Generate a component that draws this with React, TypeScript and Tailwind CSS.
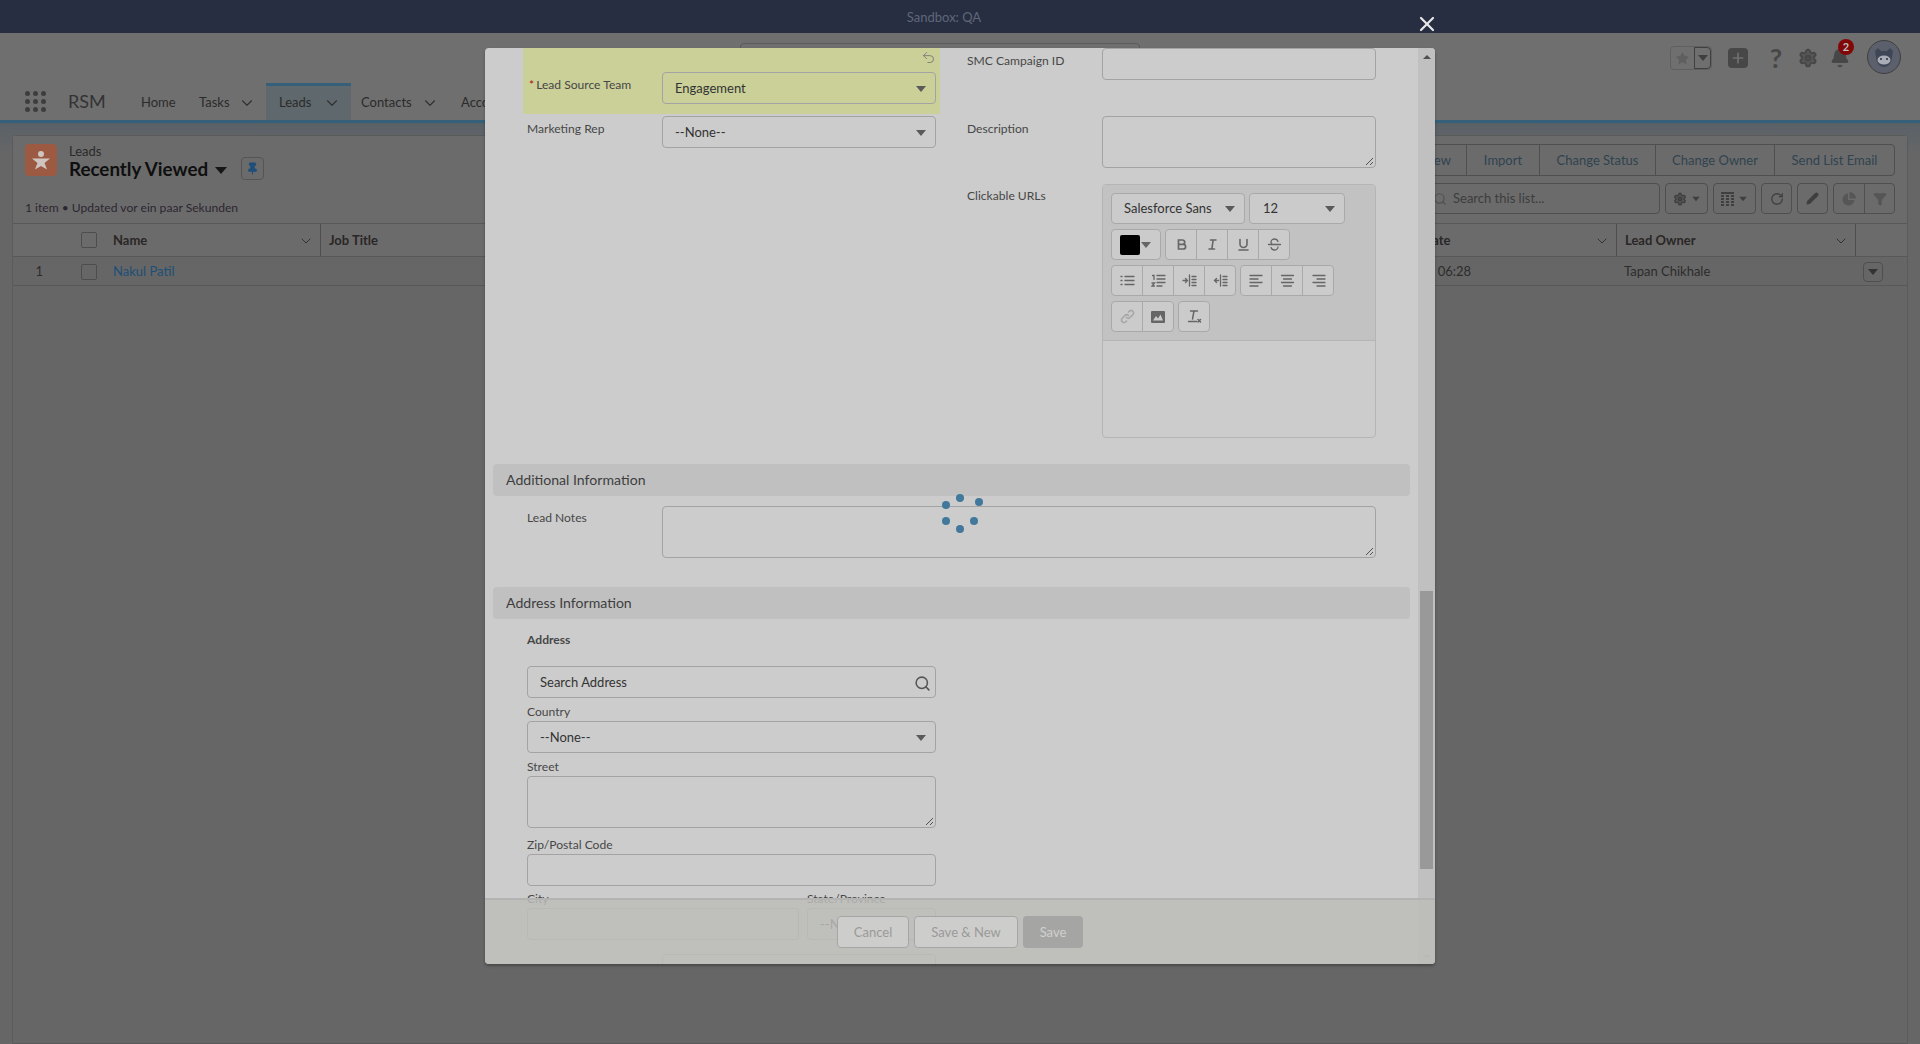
import React from "react";
import { ChevronDown, Search, X, Star, Plus, Pin, RotateCw, Undo2, Filter, Pencil, Settings, Bell } from "lucide-react";

const Caret = ({ c = "border-t-[#5a5a5a]" }: { c?: string }) => (
  <span className={`inline-block h-0 w-0 border-x-[5px] border-t-[6px] border-x-transparent ${c}`} />
);

const Tab = ({ label, w, active, chevron = true }: { label: string; w: string; active?: boolean; chevron?: boolean }) => (
  <div className={`flex h-[37px] items-center ${w} ${active ? "border-t-[3px] border-[#36607a] bg-[#5f686c] pb-[1px]" : "pt-[2px]"}`}>
    <span className="text-[13px] text-[#2b2b2b]">{label}</span>
    {chevron && <ChevronDown className="ml-auto mr-[10px] text-[#303030]" size={18} strokeWidth={1.5} />}
  </div>
);

const HeadCell = ({ label, w, chevron = true, border = true }: { label: string; w: string; chevron?: boolean; border?: boolean }) => (
  <div className={`flex h-full items-center pl-2 pr-[6px] pt-[2px] ${w} ${border ? "border-r border-[#4e4e4e]" : ""}`}>
    <span className="text-[13px] font-bold text-[#2a2626]">{label}</span>
    {chevron && <ChevronDown className="ml-auto text-[#333]" size={16} strokeWidth={1.5} />}
  </div>
);

const Label = ({ children, className = "" }: { children: React.ReactNode; className?: string }) => (
  <div className={`text-[12.1px] leading-[16px] text-[#474747] ${className}`}>{children}</div>
);

const Input = ({ className = "", children }: { className?: string; children?: React.ReactNode }) => (
  <div className={`relative flex h-[32px] items-center rounded-[4px] border border-[#a3a3a3] px-3 pt-[2px] text-[13px] text-[#333] ${className}`}>{children}</div>
);

const SelectBox = ({ value, className = "" }: { value: string; className?: string }) => (
  <Input className={className}>
    <span>{value}</span>
    <span className="ml-auto mr-[-3px] flex"><Caret /></span>
  </Input>
);

const Textarea = ({ className = "" }: { className?: string }) => (
  <div className={`relative h-[52px] rounded-[4px] border border-[#a3a3a3] ${className}`}>
    <svg className="absolute bottom-[1px] right-[1px]" width="9" height="9" viewBox="0 0 9 9">
      <path d="M1 8 8 1M5 8 8 5" stroke="#444" strokeWidth="0.9" />
    </svg>
  </div>
);

const SvgI = ({ children, dim }: { children: React.ReactNode; dim?: boolean }) => (
  <svg width="15" height="15" viewBox="0 0 15 15" fill="none" stroke={dim ? "#a5a5a5" : "#666"} strokeWidth="1.3" strokeLinecap="round">
    {children}
  </svg>
);

const TBtn = ({ children, last }: { children: React.ReactNode; last?: boolean }) => (
  <div className={`flex h-full items-center justify-center ${last ? "w-[30px]" : "w-[31px] border-r border-[#a9a9a9]"}`}>{children}</div>
);

const Group = ({ children }: { children: React.ReactNode }) => (
  <div className="flex h-[31px] rounded-[4px] border border-[#a9a9a9] bg-[#cbcbcb]">{children}</div>
);

const Lines = ({ d }: { d: string }) => <path d={d} />;

const ListBtn = ({ label, w }: { label: string; w: string }) => (
  <div className={`flex h-full items-center justify-center border-r border-[#4f4f4f] pt-[1px] text-[13px] text-[#2f4350] last:border-r-0 ${w}`}>{label}</div>
);

const ToolBtn = ({ children, w = "w-[31px]" }: { children: React.ReactNode; w?: string }) => (
  <div className={`flex h-[31px] items-center justify-center gap-1 rounded-[4px] border border-[#4f4f4f] ${w}`}>{children}</div>
);

export default function App() {
  return (
    <div className="relative h-[1044px] w-full overflow-hidden bg-[#666666]" style={{ fontFamily: 'Lato, sans-serif' }}>
      {/* Sandbox bar */}
      <div className="flex h-[33px] items-center justify-center bg-[#272e41] pr-[32px] pt-[2px] text-[13px] text-[#5f6779]">Sandbox: QA</div>

      {/* Global header */}
      <div className="h-[90px] border-b-[3px] border-[#36607a] bg-[#6f6f6f]">
        <div className="relative flex h-[50px] justify-end pr-[19px] pt-[13px]">
          <div className="absolute left-[740px] top-[10px] h-[10px] w-[400px] rounded-t-[4px] border border-[#5b5b5b]" />
          <div className="flex h-[24px] w-[42px] rounded-[4px] border border-[#5f5f5f]">
            <div className="flex w-[23px] items-center justify-center">
              <Star size={15} className="text-[#5f5f5f]" fill="#5f5f5f" strokeWidth={0} />
            </div>
            <div className="flex flex-1 items-center justify-center rounded-r-[4px] border border-[#3f3f3f]"><Caret c="border-t-[#3f3f3f]" /></div>
          </div>
          <div className="ml-[16px] mt-[2px] flex h-[20px] w-[20px] items-center justify-center rounded-[4px] bg-[#474747]">
            <Plus size={16} className="text-[#6f6f6f]" strokeWidth={2.6} />
          </div>
          <div className="ml-[21px] mt-[-3px] w-[14px] text-center text-[27px] font-bold leading-[30px] text-[#474747]">?</div>
          <div className="ml-[15px] mt-[2px]"><Settings size={20} className="text-[#474747]" fill="#474747" fillOpacity={0.6} strokeWidth={2.4} /></div>
          <div className="relative ml-[12px] mt-[2px]">
            <Bell size={20} className="text-[#474747]" fill="#474747" />
            <span className="absolute right-[-4px] top-[-9px] flex h-[16px] w-[16px] items-center justify-center rounded-full bg-[#820808] text-[11px] font-bold text-[#bdbdbd]">2</span>
          </div>
          <div className="ml-[17px] mt-[-6px] h-[34px] w-[34px]">
            <svg width="34" height="34" viewBox="0 0 34 34">
              <circle cx="17" cy="17" r="16.5" fill="#5b606c" stroke="#3f3f3f" />
              <path d="M8 11 11 8l3 3h6l3-3 3 3-1 6c0 6-4 10-8 10s-8-4-8-10Z" fill="#3f4656" />
              <ellipse cx="17" cy="20" rx="6.5" ry="4.5" fill="#a9adb6" />
              <circle cx="14" cy="19" r="1" fill="#2b3040" />
              <circle cx="20" cy="19" r="1" fill="#2b3040" />
            </svg>
          </div>
        </div>
        <div className="flex h-[37px] items-center">
          <div className="ml-[25px] grid h-[21px] w-[21px] grid-cols-3 gap-[3px]">
            {[0, 1, 2, 3, 4, 5, 6, 7, 8].map((i) => (
              <span key={i} className="h-[5px] w-[5px] rounded-full bg-[#3d3d3d]" />
            ))}
          </div>
          <div className="ml-[22px] w-[60px] text-[18px] text-[#333]">RSM</div>
          <Tab label="Home" w="w-[58px] pl-[13px]" chevron={false} />
          <Tab label="Tasks" w="w-[80px] pl-[13px]" />
          <Tab label="Leads" w="w-[85px] pl-[13px]" active />
          <Tab label="Contacts" w="w-[98px] pl-[10px]" />
          <Tab label="Accounts" w="w-[100px] pl-[12px]" />
        </div>
      </div>

      {/* Content */}
      <div className="h-[921px] bg-gradient-to-b from-[#596168] to-[#666666] to-[30px] px-[12px] pt-[12px]">
        <div className="h-full rounded-t-[4px] border border-[#5a5a5a] bg-[#666666]">
          <div className="relative h-[87px] bg-[#6b6b6b]">
            <div className="flex items-start pl-[12px] pt-[8px]">
              <div className="flex h-[32px] w-[32px] items-center justify-center rounded-[4px] bg-[#9c5a42]">
                <svg width="22" height="22" viewBox="0 0 22 22" fill="#cfc5c0">
                  <circle cx="11" cy="5" r="3" />
                  <path d="M2 9.5h18l-5.5 4.5 2.5 6.5-6-3.5-6 3.5 2.5-6.5Z" />
                </svg>
              </div>
              <div className="ml-[12px] mt-[-1px]">
                <div className="text-[13px] leading-[16px] text-[#2a2a2a]">Leads</div>
                <div className="mt-[-1px] flex items-center text-[18.8px] font-bold leading-[22px] text-[#0f0f0f]">
                  Recently Viewed
                  <span className="ml-[7px] mt-[2px] inline-block h-0 w-0 border-x-[6px] border-t-[7px] border-x-transparent border-t-[#161616]" />
                </div>
              </div>
              <div className="ml-[14px] mt-[13px] flex h-[23px] w-[23px] items-center justify-center rounded-[4px] border border-[#555]">
                <Pin size={13} className="text-[#1f4f78]" fill="#1f4f78" />
              </div>
            </div>
            <div className="absolute left-[12px] top-[64px] text-[12.1px] leading-[16px] text-[#2c2630]">1 item • Updated vor ein paar Sekunden</div>
            <div className="absolute right-[12px] top-[8px] flex h-[32px] rounded-[4px] border border-[#4f4f4f]">
              <ListBtn label="New" w="w-[58px]" />
              <ListBtn label="Import" w="w-[73px]" />
              <ListBtn label="Change Status" w="w-[116px]" />
              <ListBtn label="Change Owner" w="w-[119px]" />
              <ListBtn label="Send List Email" w="w-[119px]" />
            </div>
            <div className="absolute right-[12px] top-[47px] flex gap-[5px]">
              <div className="flex h-[31px] w-[240px] items-center rounded-[4px] border border-[#4f4f4f] pl-[12px] pt-[1px] text-[13px] text-[#3d3d3d]">
                <Search size={14} className="mr-[6px] text-[#505050]" />
                Search this list...
              </div>
              <ToolBtn w="w-[43px]">
                <Settings size={14} className="text-[#3f3f3f]" fill="#3f3f3f" fillOpacity={0.5} strokeWidth={2.4} />
                <Caret c="border-t-[#3f3f3f] scale-75" />
              </ToolBtn>
              <ToolBtn w="w-[43px]">
                <svg width="13" height="14" viewBox="0 0 13 14" fill="#3f3f3f">
                  <path d="M0 0h13v2H0zM0 3h3v2H0zM5 3h3v2H5zM10 3h3v2h-3zM0 6h3v2H0zM5 6h3v2H5zM10 6h3v2h-3zM0 9h3v2H0zM5 9h3v2H5zM10 9h3v2h-3zM0 12h3v2H0zM5 12h3v2H5zM10 12h3v2h-3z" />
                </svg>
                <Caret c="border-t-[#3f3f3f] scale-75" />
              </ToolBtn>
              <ToolBtn><RotateCw size={14} className="text-[#3f3f3f]" strokeWidth={2.2} /></ToolBtn>
              <ToolBtn><Pencil size={13} className="text-[#3f3f3f]" fill="#3f3f3f" /></ToolBtn>
              <div className="flex h-[31px] w-[62px] rounded-[4px] border border-[#4f4f4f]">
                <div className="flex w-[31px] items-center justify-center border-r border-[#4f4f4f]">
                  <svg width="14" height="14" viewBox="0 0 14 14" fill="#565656">
                    <path d="M6 1.5a6 6 0 1 0 6.5 6.5H6Z" />
                    <path d="M7.5 0v6.5H14A6.5 6.5 0 0 0 7.5 0Z" />
                  </svg>
                </div>
                <div className="flex flex-1 items-center justify-center">
                  <Filter size={14} className="text-[#565656]" fill="#565656" />
                </div>
              </div>
            </div>
          </div>
          <div className="flex h-[34px] items-center border-y border-[#585858] bg-[#6b6b6b]">
            <div className="flex h-full w-[84px] items-center justify-end">
              <span className="h-[16px] w-[16px] rounded-[2px] border border-[#4d4d4d]" />
            </div>
            <div className="w-[8px]" />
            <HeadCell label="Name" w="w-[216px]" />
            <HeadCell label="Job Title" w="w-[1052px]" />
            <HeadCell label="Create Date" w="w-[244px]" />
            <HeadCell label="Lead Owner" w="w-[239px]" />
          </div>
          <div className="flex h-[29px] items-center border-b border-[#585858] pt-[2px] text-[13px] text-[#2c2c2c]">
            <div className="w-[30px] text-right">1</div>
            <div className="flex w-[54px] justify-end">
              <span className="h-[16px] w-[16px] rounded-[2px] border border-[#4d4d4d]" />
            </div>
            <div className="w-[16px]" />
            <div className="w-[1252px] text-[#1d4f76]">Nakul Patil</div>
            <div className="w-[259px]">21.12.2023, 06:28</div>
            <div className="flex w-[259px] items-center">
              <span>Tapan Chikhale</span>
              <span className="ml-auto flex h-[20px] w-[20px] items-center justify-center rounded-[4px] border border-[#4f4f4f]"><Caret c="border-t-[#333]" /></span>
            </div>
          </div>
        </div>
      </div>

      {/* Close */}
      <X className="absolute left-[1415px] top-[12px] text-[#e8e8e8]" size={24} strokeWidth={2.2} />

      {/* Modal */}
      <div className="absolute left-[485px] top-[48px] flex h-[916px] w-[950px] overflow-hidden rounded-[4px] bg-[#cccccc] shadow-[0_2px_3px_rgba(0,0,0,0.3)]">
        <div className="h-full w-[933px] overflow-hidden">
          <div className="grid grid-cols-[444px_1fr] pl-[38px]">
            {/* left column */}
            <div>
              <div className="relative ml-0 flex h-[66px] w-[417px] bg-[#cad098] pl-[6px] pt-[24px]">
                <Undo2 className="absolute right-[4px] top-[2px] text-[#777]" size={15} strokeWidth={1.4} />
                <Label className="w-[133px] pt-[5px]"><span className="mr-[2px] text-[#a11]">*</span>Lead Source Team</Label>
                <SelectBox value="Engagement" className="w-[274px]" />
              </div>
              <div className="mt-[2px] flex pl-[4px]">
                <Label className="w-[135px] pt-[5px]">Marketing Rep</Label>
                <SelectBox value="--None--" className="w-[274px]" />
              </div>
            </div>
            {/* right column */}
            <div>
              <div className="flex">
                <Label className="w-[135px] pt-[5px]">SMC Campaign ID</Label>
                <Input className="w-[274px]" />
              </div>
              <div className="mt-[36px] flex">
                <Label className="w-[135px] pt-[5px]">Description</Label>
                <Textarea className="w-[274px]" />
              </div>
              <div className="mt-[16px] flex">
                <Label className="w-[135px] pt-[4px]">Clickable URLs</Label>
                <div className="h-[254px] w-[274px] overflow-hidden rounded-[4px] border border-[#b5b5b5]">
                  <div className="flex h-[156px] flex-col gap-[5px] border-b border-[#b5b5b5] bg-[#c2c2c2] pl-[8px] pt-[8px]">
                    <div className="flex gap-[4px]">
                      <div className="flex h-[31px] w-[134px] items-center rounded-[4px] border border-[#a9a9a9] bg-[#cbcbcb] pl-[12px] pr-[9px] text-[13px] text-[#333]">
                        Salesforce Sans<span className="ml-auto flex"><Caret /></span>
                      </div>
                      <div className="flex h-[31px] w-[96px] items-center rounded-[4px] border border-[#a9a9a9] bg-[#cbcbcb] pl-[13px] pr-[9px] text-[13px] text-[#333]">
                        12<span className="ml-auto flex"><Caret /></span>
                      </div>
                    </div>
                    <div className="flex gap-[4px]">
                      <div className="flex h-[31px] w-[50px] items-center gap-[1px] rounded-[4px] border border-[#a9a9a9] bg-[#cbcbcb] pl-[8px]">
                        <span className="h-[20px] w-[20px] rounded-[2px] bg-black" />
                        <Caret c="border-t-[#666]" />
                      </div>
                      <Group>
                        <TBtn><SvgI><path strokeWidth="1.7" d="M4.5 3h4a2.2 2.2 0 0 1 0 4.4h-4Zm0 4.4h4.8a2.3 2.3 0 0 1 0 4.6H4.5Z" /></SvgI></TBtn>
                        <TBtn><SvgI><path strokeWidth="1.6" d="M5.5 3h5.5M4 12h5.5M8.2 3 6.8 12" /></SvgI></TBtn>
                        <TBtn><SvgI><path strokeWidth="1.6" d="M3 13h9M4 2.5V7a3.5 3.5 0 0 0 7 0V2.5" /></SvgI></TBtn>
                        <TBtn last><SvgI><path strokeWidth="1.3" d="M1.5 7.5h12M11 4.5C10.5 3 9 2 7.5 2S4 3 4 5c0 1 .5 1.8 1.5 2.5M4 10.5C4.5 12 6 13 7.5 13s3.5-1 3.5-3" /></SvgI></TBtn>
                      </Group>
                    </div>
                    <div className="flex gap-[4px]">
                      <Group>
                        <TBtn><SvgI><Lines d="M5 3.5h9M5 7.5h9M5 11.5h9M1 3.5h1M1 7.5h1M1 11.5h1" /></SvgI></TBtn>
                        <TBtn><SvgI><Lines d="M6 2.5h8M6 6h8M6 9.5h8M6 13h5M1.5 2.5h1.5v4M1 10h2.5L1 13h2.5" /></SvgI></TBtn>
                        <TBtn><SvgI><Lines d="M1 7.5h4M3.5 5.5l2 2-2 2M7.5 2v11M10 3.5h4M10 6.5h4M10 9.5h4M10 12.5h4" /></SvgI></TBtn>
                        <TBtn last><SvgI><Lines d="M1.5 7.5h4M3.5 5.5l-2 2 2 2M7.5 2v11M10 3.5h4M10 6.5h4M10 9.5h4M10 12.5h4" /></SvgI></TBtn>
                      </Group>
                      <Group>
                        <TBtn><SvgI><Lines d="M1 2.5h12M1 6h8M1 9.5h12M1 13h8" /></SvgI></TBtn>
                        <TBtn><SvgI><Lines d="M1.5 2.5h12M3.5 6h8M1.5 9.5h12M3.5 13h8" /></SvgI></TBtn>
                        <TBtn last><SvgI><Lines d="M2 2.5h12M6 6h8M2 9.5h12M6 13h8" /></SvgI></TBtn>
                      </Group>
                    </div>
                    <div className="flex gap-[4px]">
                      <Group>
                        <TBtn><SvgI dim><path strokeWidth="1.5" d="M6.5 8.5a2.5 2.5 0 0 0 3.5 0l3-3a2.5 2.5 0 0 0-3.5-3.5L8.5 3M8.5 6.5a2.5 2.5 0 0 0-3.5 0l-3 3A2.5 2.5 0 0 0 5.5 13l1-1" /></SvgI></TBtn>
                        <TBtn last>
                          <svg width="14" height="12" viewBox="0 0 14 12">
                            <path fill="#666" d="M1 0h12a1 1 0 0 1 1 1v10a1 1 0 0 1-1 1H1a1 1 0 0 1-1-1V1a1 1 0 0 1 1-1Z" />
                            <path fill="#cbcbcb" d="M2 9.5 5 5l2 2.5L9.5 3.5l2.5 6Z" />
                          </svg>
                        </TBtn>
                      </Group>
                      <div className="flex h-[31px] w-[32px] items-center justify-center rounded-[4px] border border-[#a9a9a9] bg-[#cbcbcb]">
                        <SvgI><path strokeWidth="1.5" d="M3.5 2h7M7 2 5.5 10M1.5 12.5h8M11 10.5l2.5 2.5M13.5 10.5 11 13" /></SvgI>
                      </div>
                    </div>
                  </div>
                </div>
              </div>
            </div>
          </div>

          {/* Additional information */}
          <div className="mt-[26px] ml-[8px] flex h-[32px] w-[917px] items-center rounded-[4px] bg-[#c0c0c0] pl-[13px] text-[14.1px] text-[#3e3e3e]">Additional Information</div>
          <div className="ml-[42px] mt-[10px] flex">
            <Label className="w-[135px] pt-[4px]">Lead Notes</Label>
            <Textarea className="w-[714px]" />
          </div>

          {/* Address */}
          <div className="mt-[29px] ml-[8px] flex h-[32px] w-[917px] items-center rounded-[4px] bg-[#c0c0c0] pl-[13px] text-[14.1px] text-[#3e3e3e]">Address Information</div>
          <div className="ml-[42px] w-[409px]">
            <Label className="mt-[13px] font-bold text-[#3a3a3a]">Address</Label>
            <Input className="mt-[18px] text-[#5c5c5c]">
              <span>Search Address</span>
              <Search size={17} className="ml-auto mr-[-8px] text-[#555]" strokeWidth={2.2} />
            </Input>
            <Label className="mt-[6px]">Country</Label>
            <SelectBox value="--None--" className="mt-[1px]" />
            <Label className="mt-[6px]">Street</Label>
            <Textarea className="mt-[1px]" />
            <Label className="mt-[9px]">Zip/Postal Code</Label>
            <Input className="mt-[1px]" />
            <div className="mt-[5px] flex gap-[8px]">
              <div className="w-[272px]">
                <Label>City</Label>
                <Input className="mt-[1px]" />
              </div>
              <div className="flex-1">
                <Label>State/Province</Label>
                <SelectBox value="--None--" className="mt-[1px]" />
              </div>
            </div>
          </div>
          <div className="ml-[42px] mt-[14px] flex">
            <Label className="w-[135px] pt-[6px]">County</Label>
            <Input className="w-[274px]" />
          </div>
        </div>

        {/* Scrollbar */}
        <div className="flex h-full w-[17px] flex-col items-center bg-[#c0c0c0]">
          <span className="mt-[7px] h-0 w-0 border-x-[4px] border-b-[4px] border-x-transparent border-b-[#4f4f4f]" />
          <div className="mt-[532px] h-[278px] w-[13px] bg-[#999999]" />
          <span className="mt-[86px] h-0 w-0 border-x-[4px] border-t-[4px] border-x-transparent border-t-[#a9a9a7]" />
        </div>

        {/* Footer */}
        <div className="absolute bottom-0 left-0 right-0 flex h-[66px] items-start justify-end gap-[5px] border-t-2 border-[#b3b3b1] bg-[#bcbcb9]/85 pr-[352px] pt-[16px]">
          <div className="flex h-[32px] w-[72px] items-center justify-center rounded-[4px] border border-[#a6a6a6] bg-[#cdcdcb] pt-[1px] text-[13px] text-[#9a9a9a]">Cancel</div>
          <div className="flex h-[32px] w-[104px] items-center justify-center rounded-[4px] border border-[#a6a6a6] bg-[#cdcdcb] pt-[1px] text-[13px] text-[#9a9a9a]">Save &amp; New</div>
          <div className="flex h-[32px] w-[60px] items-center justify-center rounded-[4px] bg-[#a5a5a3] pt-[1px] text-[13px] text-[#d0d0d0]">Save</div>
        </div>
      </div>

      {/* Spinner */}
      <svg className="absolute left-[940px] top-[492px]" width="44" height="44" viewBox="0 0 44 44" fill="#41789b">
        <circle cx="6" cy="13" r="4" />
        <circle cx="20" cy="6" r="4" />
        <circle cx="39" cy="10" r="4" />
        <circle cx="6" cy="29" r="4" />
        <circle cx="34" cy="29" r="4" />
        <circle cx="20" cy="37" r="4" />
      </svg>
    </div>
  );
}
